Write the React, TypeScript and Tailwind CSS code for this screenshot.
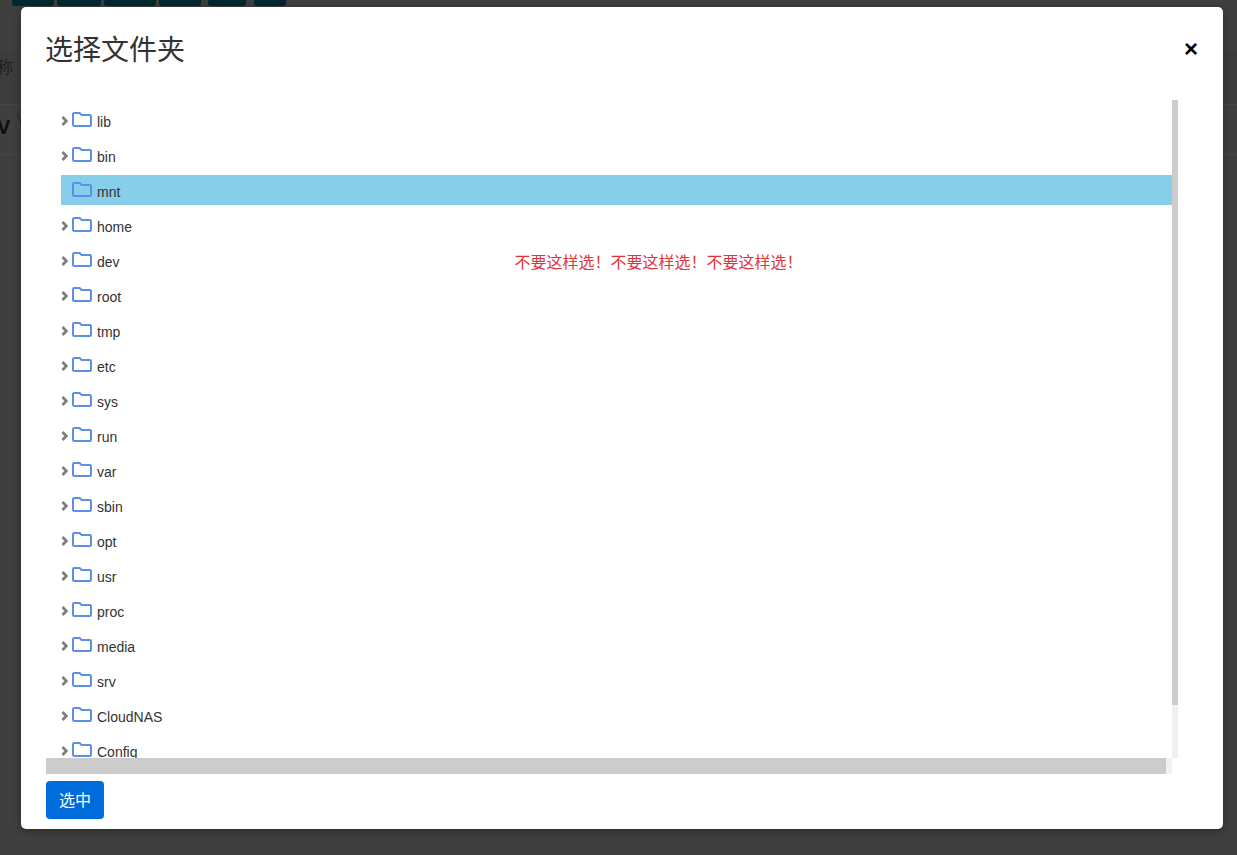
import React from "react";

const folders = ["lib","bin","mnt","home","dev","root","tmp","etc","sys","run","var","sbin","opt","usr","proc","media","srv","CloudNAS","Config"];
const topButtons = ["w-[42px]","w-[44px]","w-[52px]","w-[42px]","w-[38px]","w-[32px]"];
const topGaps = ["ml-[12px]","ml-[3px]","ml-[3px]","ml-[3px]","ml-[7px]","ml-[8px]"];
const warning = "\u4e0d\u8981\u8fd9\u6837\u9009\uff01\u4e0d\u8981\u8fd9\u6837\u9009\uff01\u4e0d\u8981\u8fd9\u6837\u9009\uff01";

function Chevron({ hidden }: { hidden?: boolean }) {
  return (
    <svg width="7" height="10" viewBox="0 0 7 10" className={hidden ? "invisible shrink-0 mt-[2px]" : "shrink-0 mt-[2px]"}>
      <path d="M1.5 1 L5.3 5 L1.5 9" fill="none" stroke="#7d7d7d" strokeWidth="2.7" />
    </svg>
  );
}

function FolderIcon() {
  return (
    <svg width="20" height="15" viewBox="0 0 20 15" className="shrink-0 ml-[4px] mb-[2px]">
      <path d="M1 2.2 Q1 1 2.2 1 H7.6 L9.6 3 H17.8 Q19 3 19 4.2 V12.8 Q19 14 17.8 14 H2.2 Q1 14 1 12.8 Z" fill="none" stroke="#5b90ea" strokeWidth="2" strokeLinejoin="round" />
    </svg>
  );
}

export default function App() {
  return (
    <div className="relative h-[855px] w-[1237px] overflow-hidden bg-[#3f3f3f] font-['Liberation_Sans','Noto_Sans_CJK_SC',sans-serif]">
      <div className="flex h-[6px]">
        {topButtons.map((w, i) => (
          <div key={i} className={`${w} ${topGaps[i]} rounded-b-[3px] bg-[#04282f]`} />
        ))}
      </div>
      <div className="mt-[44px] flex h-[55px] items-start border-b border-[#474747] bg-[#3c3c3c] pt-[4px]">
        <span className="ml-[-3px] text-[16px] leading-[24px] text-[#1e1e1e] font-['Noto_Sans_CJK_SC',sans-serif]">称</span>
      </div>
      <div className="flex h-[50px] border-b border-[#474747]">
        <span className="ml-[-3px] mt-[10px] text-[20px] font-bold leading-[24px] text-[#0d0d0d]">V</span>
        <span className="ml-[6px] mt-[5px] text-[14px] leading-[16px] text-[#2a2a2a]">V</span>
      </div>

      <div className="absolute left-[21px] top-[7px] h-[822px] w-[1202px] rounded-[5px] bg-white shadow-[0_2px_8px_rgba(0,0,0,0.35)]">
        <div className="flex h-[93px] items-center justify-between pb-[12px] pl-[25px] pr-[25px]">
          <h2 className="ml-[-1px] text-[28px] font-normal leading-[42px] text-[#333] font-['Noto_Sans_CJK_SC',sans-serif]">选择文件夹</h2>
          <button className="mt-[2px] text-[24px] font-bold leading-[24px] text-black">×</button>
        </div>
        <div className="ml-[25px] w-[1132px]">
          <div className="flex h-[658px]">
            <div className="w-[1126px] overflow-hidden pl-[15px] pt-[5px]">
              {folders.map((name) => (
                <div key={name} className={name === "mnt" ? "mb-[5px] flex h-[30px] items-center bg-[#87ceeb]" : "mb-[5px] flex h-[30px] items-center"}>
                  <Chevron hidden={name === "mnt"} />
                  <FolderIcon />
                  <span className="ml-[5px] mt-[4px] text-[14px] leading-[20px] text-[#333]">{name}</span>
                  {name === "dev" && (
                    <span className="ml-[395px] mt-[2px] text-[16px] leading-[20px] text-[#e23636] font-['Noto_Sans_CJK_SC',sans-serif]">
                      {warning}
                    </span>
                  )}
                </div>
              ))}
            </div>
            <div className="flex w-[6px] flex-col bg-[#f1f1f1]">
              <div className="h-[605px] bg-[#cccccc]" />
            </div>
          </div>
          <div className="flex h-[16px] w-[1126px] bg-[#f1f1f1]">
            <div className="w-[1120px] bg-[#cccccc]" />
          </div>
        </div>
        <button className="ml-[25px] mt-[7px] flex h-[38px] w-[58px] items-center justify-center rounded-[4px] bg-[#006bdb] pb-[3px] text-[16px] text-white font-['Noto_Sans_CJK_SC',sans-serif]">
          选中
        </button>
      </div>
    </div>
  );
}
